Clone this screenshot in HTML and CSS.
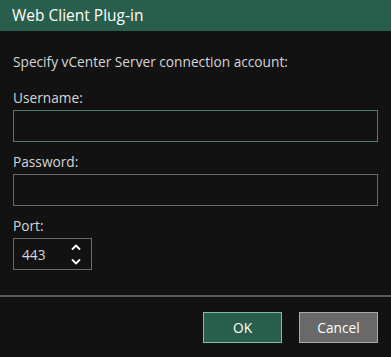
FILE: index.html
```html
<!DOCTYPE html>
<html>
<head>
<meta charset="utf-8">
<link rel="stylesheet" href="styles.css">
</head>
<body>
<div class="dialog">
  <div class="header">Web Client Plug-in</div>
  <div class="content">
    <div class="intro">Specify vCenter Server connection account:</div>
    <label class="label">Username:</label>
    <div class="input focused"></div>
    <label class="label">Password:</label>
    <div class="input"></div>
    <label class="label">Port:</label>
    <div class="spinner">
      <span class="value">443</span>
      <span class="arrows">
        <svg width="10" height="7" viewBox="0 0 10 7"><path d="M1 5.5 L5 1.5 L9 5.5" fill="none" stroke="#fff" stroke-width="1.8"/></svg>
        <svg width="10" height="7" viewBox="0 0 10 7"><path d="M1 1.5 L5 5.5 L9 1.5" fill="none" stroke="#fff" stroke-width="1.8"/></svg>
      </span>
    </div>
  </div>
  <div class="footer">
    <button class="btn primary">OK</button>
    <button class="btn secondary">Cancel</button>
  </div>
</div>
</body>
</html>
```

FILE: styles.css
```css
html, body {
  margin: 0;
  padding: 0;
  background: #121212;
}
.dialog {
  width: 391px;
  height: 357px;
  background: #121212;
  font-family: "Open Sans", "Noto Sans", sans-serif;
  color: #d6d6d6;
  display: flex;
  flex-direction: column;
}
.header {
  height: 31px;
  background: #2a5e4c;
  color: #ffffff;
  font-size: 15.5px;
  line-height: 31px;
  padding-left: 12px;
  box-sizing: border-box;
}
.content {
  padding: 23px 13px 0 13px;
  display: flex;
  flex-direction: column;
  height: 266px;
  box-sizing: border-box;
  border-bottom: 2px solid #5a5a5a;
}
.intro {
  font-size: 13.7px;
  line-height: 16px;
  margin-bottom: 20px;
}
.label {
  font-size: 13.7px;
  line-height: 16px;
  margin-bottom: 4px;
}
.input {
  height: 32px;
  box-sizing: border-box;
  border: 1px solid #6a6a6a;
  margin-bottom: 12px;
}
.input.focused {
  border-color: #4d7d6c;
}
.spinner {
  width: 79px;
  height: 32px;
  box-sizing: border-box;
  border: 1px solid #6a6a6a;
  display: flex;
  align-items: center;
  justify-content: space-between;
  padding: 0 10px 0 8px;
}
.value {
  font-size: 13.7px;
  color: #d6d6d6;
}
.arrows {
  display: flex;
  flex-direction: column;
  gap: 7px;
}
.arrows svg {
  display: block;
}
.footer {
  display: flex;
  justify-content: flex-end;
  gap: 17px;
  padding: 15px 13px 0 0;
}
.btn {
  width: 79px;
  height: 31px;
  box-sizing: border-box;
  font-family: "Open Sans", "Noto Sans", sans-serif;
  font-size: 13.7px;
  color: #ffffff;
  cursor: pointer;
  padding: 0;
}
.btn.primary {
  background: #2a5e4c;
  border: 1px solid #7fbfa3;
}
.btn.secondary {
  background: #696969;
  border: 1px solid #a8a8a8;
}
```
